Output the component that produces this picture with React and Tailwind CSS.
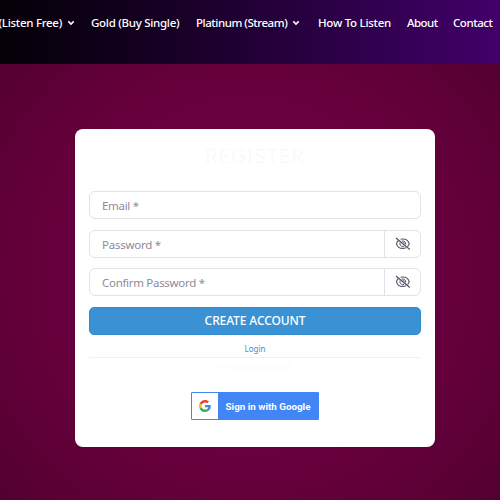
const navItems = [
  { label: "(Listen Free)", width: "w-[78px] justify-end", menu: true, space: "tracking-[-0.28px]" },
  { label: "Gold (Buy Single)", width: "w-[89px]", space: "tracking-[-0.28px]" },
  { label: "Platinum (Stream)", width: "w-[106px]", menu: true, space: "tracking-[-0.46px]" },
  { label: "How To Listen", width: "w-[73px]", space: "tracking-[-0.26px]" },
  { label: "About", width: "w-[30px]", space: "tracking-[-0.55px]" },
  { label: "Contact", width: "w-[40px]", space: "tracking-[-0.45px]" },
];

function Chevron() {
  return (
    <svg viewBox="0 0 8 6" className="ml-[5px] h-[6px] w-2 shrink-0" fill="none" aria-hidden="true">
      <path d="M1.3 1.4 4 4.1l2.7-2.7" stroke="currentColor" strokeWidth="1.5" />
    </svg>
  );
}

function EyeOff() {
  return (
    <svg viewBox="0 0 16 14" className="h-[14px] w-4" fill="none" stroke="#57536b" aria-hidden="true">
      <path d="M3.7 3.2C2.4 4.1 1.7 5.4 1.5 6.8c.7 2.7 3.3 4.6 6.3 4.6 1.2 0 2.2-.2 3.1-.7M5.6 2.3c.7-.2 1.4-.3 2.2-.3 3.1 0 5.6 1.9 6.4 4.7-.3 1.1-.9 2.1-1.7 2.9" strokeWidth="1.1" />
      <path d="M5.1 5.5c-.8 2.2.7 4 2.7 4 .5 0 .9-.1 1.3-.3M6.8 4.1c2.3-.7 4.3 1.1 3.8 3.4" strokeWidth="1" />
      <path d="M7.8 5.3c.9-.1 1.6.5 1.6 1.4" strokeWidth="1" />
      <path d="m1 1.1 13.8 11.5" strokeWidth="1.3" />
    </svg>
  );
}

function GoogleMark() {
  return (
    <svg viewBox="0 0 48 48" className="h-3 w-3" aria-hidden="true">
      <path fill="#EA4335" d="M24 9.5c3.54 0 6.71 1.22 9.21 3.6l6.85-6.85C35.9 2.38 30.47 0 24 0 14.62 0 6.51 5.38 2.56 13.22l7.98 6.19C12.43 13.72 17.74 9.5 24 9.5z" />
      <path fill="#4285F4" d="M46.98 24.55c0-1.57-.15-3.09-.38-4.55H24v9.02h12.94c-.58 2.96-2.26 5.48-4.78 7.18l7.73 6c4.51-4.18 7.09-10.36 7.09-17.65z" />
      <path fill="#FBBC05" d="M10.53 28.59A14.5 14.5 0 0 1 9.77 24c0-1.6.27-3.14.76-4.59l-7.98-6.19A24 24 0 0 0 0 24c0 3.88.92 7.54 2.56 10.78l7.97-6.19z" />
      <path fill="#34A853" d="M24 48c6.48 0 11.93-2.13 15.89-5.81l-7.73-6c-2.15 1.45-4.92 2.3-8.16 2.3-6.26 0-11.57-4.22-13.47-9.91l-7.98 6.19C6.51 42.62 14.62 48 24 48z" />
    </svg>
  );
}

function Field({ label, space, secret = false }) {
  return (
    <div className="flex h-7 items-stretch overflow-hidden rounded-[6px] border border-[#e2e2e5]">
      <span className={`flex-1 pl-3 text-[11.5px] leading-[27px] text-[#8d8b98] ${space}`}>{label}</span>
      {secret && (
        <button type="button" aria-label="Show password" className="flex w-9 items-center justify-center border-l border-[#e2e2e5] pl-px">
          <EyeOff />
        </button>
      )}
    </div>
  );
}

export default function App() {
  return (
    <div className="flex h-[500px] w-[500px] flex-col overflow-hidden bg-[radial-gradient(circle_at_50%_55%,#6d0041_0%,#66003c_55%,#4e002e_100%)] font-['Noto_Sans',sans-serif]">
      <header className="h-16 bg-linear-to-r from-[#050008] via-[#210035] to-[#42006b]">
        <nav className="flex justify-end gap-4 pt-[14px] pr-[7px] text-[11.5px] leading-[17px] font-medium text-white">
          {navItems.map((item) => (
            <a key={item.label} className={`flex shrink-0 items-center whitespace-nowrap ${item.width} ${item.space}`}>
              {item.label}
              {item.menu && <Chevron />}
            </a>
          ))}
        </nav>
      </header>

      <main className="pt-[65px] pl-[75px]">
        <section className="flex h-[318px] w-[360px] flex-col rounded-lg bg-white px-[14px]">
          <h1 className="mt-[14px] h-[26px] text-center text-[20px] leading-[26px] font-light tracking-[1.4px] text-[#f8f8f8]">REGISTER</h1>

          <form className="mt-[22px] flex w-[332px] flex-col">
            <div className="flex flex-col gap-[10.5px]">
              <Field label="Email *" space="tracking-[-0.3px]" />
              <Field label="Password *" space="tracking-[-0.25px]" secret />
              <Field label="Confirm Password *" space="tracking-[-0.3px]" secret />
            </div>
            <button type="button" className="mt-[11px] h-7 rounded-[5px] border border-[#2e8bd0] bg-[#3a92d5] text-[12px] leading-[26px] font-medium tracking-[-0.1px] text-white">
              CREATE ACCOUNT
            </button>
          </form>

          <a className="mt-2 text-center text-[8px] leading-3 text-[#3e91c9]">Login</a>
          <div className="mt-[2px] border-t border-[#f1f1f1]" />
          <p className="mt-[3px] text-center text-[9px] leading-3 text-[#fbfbfb]">or sign up faster!</p>

          <button type="button" className="mt-[19px] flex h-7 w-[128px] self-center overflow-hidden rounded-[1px] border border-[#4285f4] bg-[#4285f4]">
            <span className="flex h-full w-[26px] items-center justify-center bg-white">
              <GoogleMark />
            </span>
            <span className="flex-1 text-center font-[Roboto,sans-serif] text-[9.8px] leading-[27px] font-bold whitespace-nowrap text-white">
              Sign in with Google
            </span>
          </button>
        </section>
      </main>
    </div>
  );
}
